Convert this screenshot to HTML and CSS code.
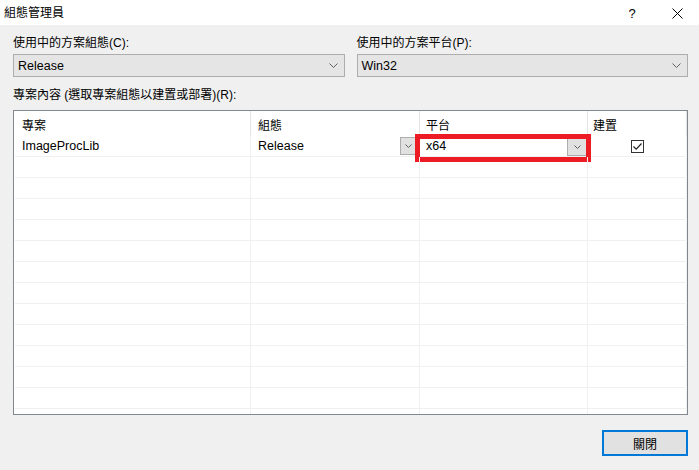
FILE: index.html
```html
<!DOCTYPE html>
<html lang="zh-Hant">
<head>
<meta charset="utf-8">
<title>組態管理員</title>
<link rel="stylesheet" href="styles.css">
</head>
<body>
<div class="window">
  <div class="titlebar">
    <span class="title">組態管理員</span>
    <div class="title-btns">
      <span class="tbtn help">?</span>
      <span class="tbtn close"><svg width="11" height="11" viewBox="0 0 11 11"><path d="M0.5 0.5L10.5 10.5M10.5 0.5L0.5 10.5" stroke="#000" stroke-width="1"/></svg></span>
    </div>
  </div>
  <div class="content">
    <div class="top-grid">
      <div class="field">
        <div class="label">使用中的方案組態(C):</div>
        <div class="select"><span>Release</span><svg class="chev" width="9" height="5" viewBox="0 0 9 5"><path d="M0.5 0.5L4.5 4.5L8.5 0.5" fill="none" stroke="#606060" stroke-width="1"/></svg></div>
      </div>
      <div class="field">
        <div class="label">使用中的方案平台(P):</div>
        <div class="select"><span>Win32</span><svg class="chev" width="9" height="5" viewBox="0 0 9 5"><path d="M0.5 0.5L4.5 4.5L8.5 0.5" fill="none" stroke="#606060" stroke-width="1"/></svg></div>
      </div>
    </div>
    <div class="label label2">專案內容 (選取專案組態以建置或部署)(R):</div>
    <div class="grid">
      <div class="row head">
        <div class="cell c1">專案</div>
        <div class="cell c2">組態</div>
        <div class="cell c3">平台</div>
        <div class="cell c4">建置</div>
      </div>
      <div class="row">
        <div class="cell c1">ImageProcLib</div>
        <div class="cell c2"><span>Release</span><span class="ddbtn small"><svg width="7" height="4" viewBox="0 0 7 4"><path d="M0.5 0.5L3.5 3.5L6.5 0.5" fill="none" stroke="#606060" stroke-width="1"/></svg></span></div>
        <div class="cell c3 editing"><span class="combo-text">x64</span><span class="ddbtn big"><svg width="7" height="4" viewBox="0 0 7 4"><path d="M0.5 0.5L3.5 3.5L6.5 0.5" fill="none" stroke="#606060" stroke-width="1"/></svg></span><span class="highlight"></span></div>
        <div class="cell c4 center"><span class="checkbox"><svg width="11" height="11" viewBox="0 0 11 11"><path d="M1.5 5.5L4.2 8.2L9.5 2.5" fill="none" stroke="#222" stroke-width="1.2"/></svg></span></div>
      </div>
      <div class="row"><div class="cell c1"></div><div class="cell c2"></div><div class="cell c3"></div><div class="cell c4"></div></div>
      <div class="row"><div class="cell c1"></div><div class="cell c2"></div><div class="cell c3"></div><div class="cell c4"></div></div>
      <div class="row"><div class="cell c1"></div><div class="cell c2"></div><div class="cell c3"></div><div class="cell c4"></div></div>
      <div class="row"><div class="cell c1"></div><div class="cell c2"></div><div class="cell c3"></div><div class="cell c4"></div></div>
      <div class="row"><div class="cell c1"></div><div class="cell c2"></div><div class="cell c3"></div><div class="cell c4"></div></div>
      <div class="row"><div class="cell c1"></div><div class="cell c2"></div><div class="cell c3"></div><div class="cell c4"></div></div>
      <div class="row"><div class="cell c1"></div><div class="cell c2"></div><div class="cell c3"></div><div class="cell c4"></div></div>
      <div class="row"><div class="cell c1"></div><div class="cell c2"></div><div class="cell c3"></div><div class="cell c4"></div></div>
      <div class="row"><div class="cell c1"></div><div class="cell c2"></div><div class="cell c3"></div><div class="cell c4"></div></div>
      <div class="row"><div class="cell c1"></div><div class="cell c2"></div><div class="cell c3"></div><div class="cell c4"></div></div>
      <div class="row"><div class="cell c1"></div><div class="cell c2"></div><div class="cell c3"></div><div class="cell c4"></div></div>
      <div class="row"><div class="cell c1"></div><div class="cell c2"></div><div class="cell c3"></div><div class="cell c4"></div></div>
      <div class="row filler"><div class="cell c1"></div><div class="cell c2"></div><div class="cell c3"></div><div class="cell c4"></div></div>
    </div>
    <div class="footer">
      <button class="close-btn">關閉</button>
    </div>
  </div>
</div>
</body>
</html>
```

FILE: styles.css
```css
* { box-sizing: border-box; }
html, body { margin: 0; padding: 0; }
body {
  font-family: "Liberation Sans", "Noto Sans CJK TC", sans-serif;
  font-size: 12px;
  color: #000;
  background: #f0f0f0;
}
.window {
  width: 699px;
  height: 470px;
  background: #f0f0f0;
  display: flex;
  flex-direction: column;
  overflow: hidden;
}
.titlebar {
  height: 25px;
  background: #fff;
  display: flex;
  align-items: center;
  justify-content: space-between;
  flex: none;
}
.title {
  padding-left: 4px;
  padding-top: 2px;
  line-height: 23px;
}
.title-btns {
  display: flex;
  height: 25px;
}
.tbtn {
  display: flex;
  align-items: center;
  justify-content: center;
  height: 25px;
  padding-top: 2px;
}
.help { width: 46px; font-size: 13px; }
.close { width: 44px; }
.content {
  padding: 10px 11px 0 13px;
  display: flex;
  flex-direction: column;
}
.top-grid {
  display: grid;
  grid-template-columns: 1fr 1fr;
  column-gap: 12px;
}
.label {
  line-height: 16px;
  height: 16px;
  white-space: nowrap;
}
.select {
  margin-top: 3px;
  height: 23px;
  background: #e5e5e5;
  border: 1px solid #adadad;
  display: flex;
  align-items: center;
  justify-content: space-between;
  padding: 0 6px 0 4px;
  font-size: 12.5px;
}
.chev { display: block; }
.label2 { margin-top: 10px; }
.grid {
  margin-top: 7px;
  height: 305px;
  background: #fff;
  border: 1px solid #828790;
  padding: 0 1px;
  display: flex;
  flex-direction: column;
}
.row {
  display: grid;
  grid-template-columns: 236px 169px 168px 99px;
  height: 21px;
  border-bottom: 1px solid #f0f0f0;
  flex: none;
}
.row.head {
  height: 25px;
  border-bottom: none;
}
.row.filler {
  height: 5px;
  border-bottom: none;
}
.cell {
  border-right: 1px solid #f0f0f0;
  padding-left: 7px;
  display: flex;
  align-items: center;
  position: relative;
  white-space: nowrap;
  font-size: 12.5px;
}
.head .cell {
  border-right-color: #e5e5e5;
  padding-top: 1px;
  font-size: 12px;
}
.c2 {
  justify-content: space-between;
  padding-right: 3px;
}
.c3 { padding-left: 6px; }
.c4 { padding-left: 5px; }
.editing {
  justify-content: space-between;
  padding-right: 0;
}
.ddbtn {
  display: flex;
  align-items: center;
  justify-content: center;
  background: #e1e1e1;
  border: 1px solid #adadad;
}
.ddbtn svg { display: block; }
.ddbtn.small {
  width: 16px;
  height: 18px;
}
.ddbtn.big {
  width: 20px;
  height: 18px;
  margin-top: 2px;
}
.highlight {
  position: absolute;
  left: -5px;
  top: -2px;
  width: 176px;
  height: 28px;
  border: 5px solid #ed1c24;
  pointer-events: none;
}
.center {
  justify-content: center;
  padding-left: 0;
}
.checkbox {
  width: 13px;
  height: 13px;
  border: 1px solid #333;
  background: #fff;
  display: flex;
  align-items: center;
  justify-content: center;
}
.checkbox svg { display: block; }
.footer {
  margin-top: 15px;
  display: flex;
  justify-content: flex-end;
}
.close-btn {
  width: 86px;
  height: 26px;
  background: #e1e1e1;
  border: 2px solid #0078d7;
  font-family: "Liberation Sans", "Noto Sans CJK TC", sans-serif;
  font-size: 12px;
  color: #000;
  padding: 0;
  margin: 0;
}
```
